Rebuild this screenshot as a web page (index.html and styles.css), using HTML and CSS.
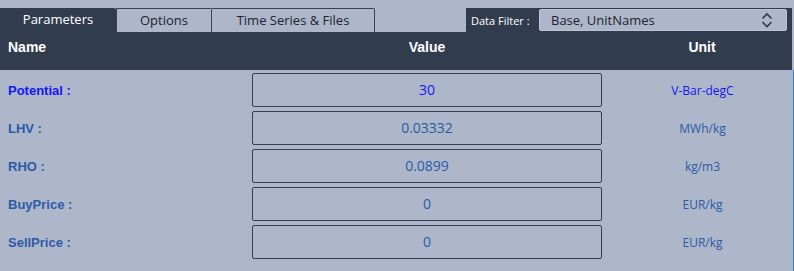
FILE: index.html
```html
<!DOCTYPE html>
<html lang="en">
<head>
    <meta charset="UTF-8">
    <title>Parameters</title>
    <link rel="stylesheet" href="styles.css">
</head>
<body>
    <div class="tabbar">
        <div class="tab active">Parameters</div>
        <div class="tab">Options</div>
        <div class="tab last">Time Series &amp; Files</div>
        <div class="spacer"></div>
        <div class="filter">
            <span class="filter-label">Data Filter :</span>
            <div class="select">
                <span>Base, UnitNames</span>
                <svg class="chevrons" width="12" height="18" viewBox="0 0 12 18">
                    <path d="M1.5 7.5 L6 3 L10.5 7.5" fill="none" stroke="#333c4c" stroke-width="1.6"/>
                    <path d="M1.5 11 L6 15.5 L10.5 11" fill="none" stroke="#333c4c" stroke-width="1.6"/>
                </svg>
            </div>
        </div>
    </div>

    <div class="header">
        <div class="col-name">Name</div>
        <div class="col-value">Value</div>
        <div class="col-unit">Unit</div>
    </div>

    <div class="rows">
        <div class="row selected">
            <div class="label">Potential :</div>
            <div class="value">30</div>
            <div class="unit">V-Bar-degC</div>
        </div>
        <div class="row">
            <div class="label">LHV :</div>
            <div class="value">0.03332</div>
            <div class="unit">MWh/kg</div>
        </div>
        <div class="row">
            <div class="label">RHO :</div>
            <div class="value">0.0899</div>
            <div class="unit">kg/m3</div>
        </div>
        <div class="row">
            <div class="label">BuyPrice :</div>
            <div class="value">0</div>
            <div class="unit">EUR/kg</div>
        </div>
        <div class="row">
            <div class="label">SellPrice :</div>
            <div class="value">0</div>
            <div class="unit">EUR/kg</div>
        </div>
    </div>
</body>
</html>
```

FILE: styles.css
```css
body {
    margin: 0;
    padding-top: 8px;
    background: #adb7c9;
    font-family: 'Open Sans', 'Liberation Sans', sans-serif;
    color: #323c4f;
    width: 794px;
    height: 271px;
    overflow: hidden;
}
.tabbar {
    display: flex;
    height: 24px;
    margin-right: 2px;
}
.tab {
    box-sizing: border-box;
    height: 24px;
    font-size: 13px;
    line-height: 22px;
    text-align: center;
    border: 1px solid #3a4356;
    border-bottom: none;
    border-left: none;
    border-radius: 0 2px 0 0;
    color: #1d2330;
}
.tab:nth-child(2) {
    width: 96px;
    border-left: 1px solid #3a4356;
}
.tab.last {
    width: 163px;
}
.tab.active {
    width: 116px;
    background: #323c4f;
    color: #ffffff;
    border: none;
}
.spacer {
    flex: 1;
}
.filter {
    width: 326px;
    background: #323c4f;
    display: flex;
    align-items: center;
    padding-left: 5px;
    box-sizing: border-box;
}
.filter-label {
    color: #ffffff;
    font-size: 11px;
    width: 68px;
}
.select {
    box-sizing: border-box;
    width: 248px;
    height: 22px;
    margin-top: 1px;
    margin-bottom: 1px;
    background: #adb7c9;
    border: 1px solid #bcc5d4;
    border-radius: 2px;
    display: flex;
    align-items: center;
    justify-content: space-between;
    padding: 0 13px 0 11px;
    font-size: 13px;
    color: #1d2330;
}
.chevrons {
    display: block;
}
.header {
    display: grid;
    grid-template-columns: 252px 350px 1fr;
    height: 38px;
    background: #323c4f;
    margin-right: 2px;
    color: #ffffff;
    font-family: 'Liberation Sans', Arial, sans-serif;
    font-weight: bold;
    font-size: 14px;
    line-height: 30px;
}
.col-name {
    padding-left: 8px;
}
.col-value {
    text-align: center;
}
.col-unit {
    text-align: center;
    padding-left: 10px;
}
.rows {
    padding-top: 1px;
    height: 200px;
    border-right: 1px solid #2d7fd6;
}
.row {
    display: grid;
    grid-template-columns: 252px 350px 1fr;
    align-items: center;
    height: 38px;
}
.label {
    padding-left: 8px;
    font-family: 'Liberation Sans', Arial, sans-serif;
    font-weight: bold;
    font-size: 13px;
    color: #2c5aa8;
}
.value {
    box-sizing: border-box;
    height: 34px;
    border: 1.5px solid #363f50;
    border-radius: 2px;
    text-align: center;
    line-height: 31px;
    font-size: 14px;
    color: #2c5aa8;
}
.unit {
    text-align: center;
    padding-left: 10px;
    font-size: 12px;
    color: #2c5aa8;
}
.row.selected .label,
.row.selected .value,
.row.selected .unit {
    color: #1616f5;
}
```
